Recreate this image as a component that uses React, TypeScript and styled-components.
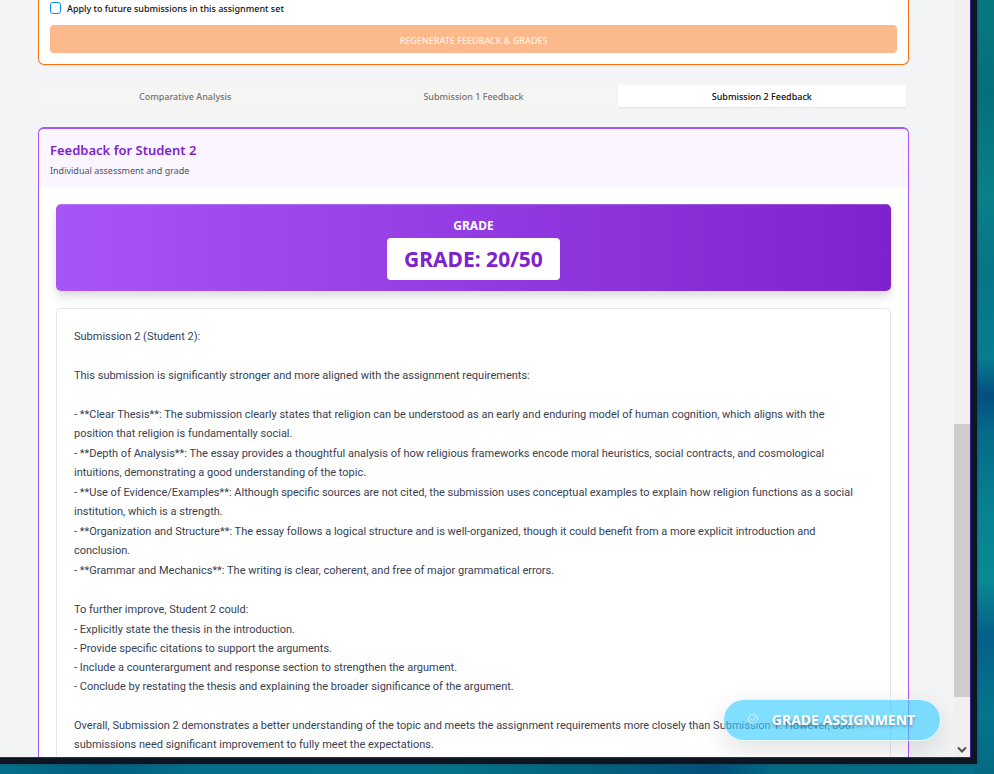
import React from "react";
import styled, { createGlobalStyle } from "styled-components";

const GlobalStyle = createGlobalStyle`
  *, *::before, *::after { box-sizing: border-box; }
  body { margin: 0; overflow: hidden; font-family: "Noto Sans", "Open Sans", sans-serif; }
  h2, p, ul { margin: 0; padding: 0; }
  button { font-family: inherit; border: 0; padding: 0; cursor: pointer; }
`;

const Desktop = styled.div`
  height: 100vh;
  padding: 0 17px 10px 0;
  background:
    linear-gradient(90deg, #04708a 0%, #035f7f 10%, #04708a 20%, #04738a 45%, #045f7c 62%, #034f7a 72%, #046a84 78%, #046f88 98%, transparent 98%) bottom / 100% 10px no-repeat,
    linear-gradient(180deg, #087880 0%, #066f7c 12%, #0a8087 25%, #067687 35%, #067e90 46%, #044f80 51%, #056a8a 56%, #078291 66%, #0a8a94 75%, #05608a 82%, #05748c 92%, #046a84 100%);
`;

const WindowFrame = styled.div`
  height: 100%;
  border: solid #0d1523;
  border-width: 0 6px 6px 0;
  box-shadow: 0 0 2px #1f3f48;
`;

const WindowBody = styled.div`
  display: flex;
  height: 100%;
  border: solid #3a1f9e;
  border-width: 0 1px 1px 0;
  background: #f3f4f6;
`;

const Viewport = styled.div`
  position: relative;
  flex: 1;
  min-width: 0;
  overflow: hidden;
  padding: 0 45px 0 38px;
`;

const Scrollbar = styled.div`
  display: flex;
  flex-direction: column;
  width: 16px;
  background: #f0f0f0;
`;

const TrackAbove = styled.div`
  flex: 424 0 0;
`;

const Thumb = styled.div`
  flex: 273 0 0;
  background: #cdcdcd;
`;

const TrackBelow = styled.div`
  display: flex;
  flex: 60 0 0;
  align-items: flex-end;
  justify-content: center;

  svg { margin-bottom: 3px; }
`;

const OptionsCard = styled.section`
  padding: 0 11px 11px;
  border: 1px solid #f97316;
  border-top: 0;
  border-radius: 0 0 6px 6px;
  background: #fff;
  box-shadow: 0 1px 2px rgba(0, 0, 0, 0.06);
`;

const CheckLabel = styled.label`
  display: flex;
  align-items: center;
  gap: 6px;
  height: 25px;
  padding-bottom: 9px;
  color: #111;
  font-size: 9px;
  font-weight: 500;
`;

const CheckBox = styled.input`
  appearance: none;
  width: 11px;
  height: 12px;
  margin: 0;
  border: 1px solid #0c8ce9;
  border-radius: 3px;
  background: #fff;
`;

const RegenerateButton = styled.button`
  display: block;
  width: 100%;
  height: 28px;
  border-radius: 4px;
  background: #fcb98b;
  color: #fff0e5;
  font-size: 9px;
  font-weight: 500;
  padding-top: 2px;
`;

const Tabs = styled.div`
  display: grid;
  grid-template-columns: repeat(3, 1fr);
  margin: 17px 0;
  padding: 3px;
  border-radius: 5px;
  background: #f5f5f4;
`;

const Tab = styled.button<{ $active?: boolean }>`
  height: 22px;
  border-radius: 2px;
  background: ${(p) => (p.$active ? "#fff" : "transparent")};
  box-shadow: ${(p) => (p.$active ? "0 1px 2px rgba(0, 0, 0, 0.08)" : "none")};
  color: ${(p) => (p.$active ? "#0c0a09" : "#78716c")};
  font-size: 9px;
  font-weight: 500;
`;

const FeedbackCard = styled.section`
  border: 1px solid #a855f7;
  border-top-width: 2px;
  border-radius: 6px 6px 0 0;
  background: #fff;
`;

const FeedbackHeader = styled.header`
  height: 58px;
  padding: 12px 12px 0 11px;
  border-radius: 5px 5px 0 0;
  background: #faf5ff;
`;

const FeedbackTitle = styled.h2`
  color: #7e22ce;
  font-size: 13px;
  font-weight: 600;
  line-height: 18px;
`;

const FeedbackSubtitle = styled.p`
  margin-top: 5px;
  color: #4b5563;
  font-size: 9px;
  line-height: 14px;
`;

const FeedbackContent = styled.div`
  padding: 17px;
`;

const GradeBanner = styled.div`
  display: flex;
  flex-direction: column;
  align-items: center;
  margin-bottom: 17px;
  padding: 13px 0 11px;
  border-radius: 5px;
  background: linear-gradient(90deg, #a855f7, #7e22ce);
  box-shadow: 0 7px 10px rgba(0, 0, 0, 0.1), 0 3px 4px rgba(0, 0, 0, 0.04), inset 0 1px rgba(255, 255, 255, 0.2);
`;

const GradeHeading = styled.div`
  margin-bottom: 3px;
  color: #fff;
  font-size: 12px;
  font-weight: 700;
  line-height: 18px;
`;

const GradeValue = styled.div`
  padding: 6px 17px;
  border-radius: 4px;
  background: #fff;
  color: #7e22ce;
  font-size: 21px;
  font-weight: 700;
  line-height: 30px;
`;

const Report = styled.article`
  display: flex;
  flex-direction: column;
  gap: 20px;
  padding: 18px 28px 18px 17px;
  border: 1px solid #e5e7eb;
  border-radius: 5px;
  color: #374151;
  font-family: Roboto, "Open Sans", sans-serif;
  font-size: 11px;
  line-height: 19px;
`;

const ReportList = styled.ul<{ $gap: number }>`
  display: flex;
  flex-direction: column;
  gap: ${(p) => p.$gap}px;
  list-style: none;
`;

const Advice = styled.div`
  display: flex;
  flex-direction: column;
  gap: 1px;
`;

const GradeButton = styled.button`
  position: absolute;
  right: 13px;
  bottom: 16px;
  display: flex;
  align-items: center;
  justify-content: center;
  gap: 13px;
  width: 218px;
  height: 42px;
  padding: 0 2px 2px 0;
  border: 1px solid rgba(255, 255, 255, 0.8);
  border-radius: 21px;
  background: rgba(56, 203, 255, 0.64);
  box-shadow: 0 10px 30px rgba(0, 0, 0, 0.12);
  color: #fff;
  font-size: 14px;
  font-weight: 700;
  text-shadow: 0 2px 3px rgba(0, 0, 0, 0.3);
`;

const findings = [
  "- **Clear Thesis**: The submission clearly states that religion can be understood as an early and enduring model of human cognition, which aligns with the position that religion is fundamentally social.",
  "- **Depth of Analysis**: The essay provides a thoughtful analysis of how religious frameworks encode moral heuristics, social contracts, and cosmological intuitions, demonstrating a good understanding of the topic.",
  "- **Use of Evidence/Examples**: Although specific sources are not cited, the submission uses conceptual examples to explain how religion functions as a social institution, which is a strength.",
  "- **Organization and Structure**: The essay follows a logical structure and is well-organized, though it could benefit from a more explicit introduction and conclusion.",
  "- **Grammar and Mechanics**: The writing is clear, coherent, and free of major grammatical errors.",
];

const suggestions = [
  "- Explicitly state the thesis in the introduction.",
  "- Provide specific citations to support the arguments.",
  "- Include a counterargument and response section to strengthen the argument.",
  "- Conclude by restating the thesis and explaining the broader significance of the argument.",
];

export default function App() {
  return (
    <Desktop>
      <GlobalStyle />
      <WindowFrame>
        <WindowBody>
          <Viewport>
            <OptionsCard>
              <CheckLabel>
                <CheckBox type="checkbox" />
                Apply to future submissions in this assignment set
              </CheckLabel>
              <RegenerateButton type="button">REGENERATE FEEDBACK &amp; GRADES</RegenerateButton>
            </OptionsCard>
            <Tabs role="tablist">
              <Tab type="button" role="tab" aria-selected={false}>Comparative Analysis</Tab>
              <Tab type="button" role="tab" aria-selected={false}>Submission 1 Feedback</Tab>
              <Tab type="button" role="tab" aria-selected $active>Submission 2 Feedback</Tab>
            </Tabs>
            <FeedbackCard>
              <FeedbackHeader>
                <FeedbackTitle>Feedback for Student 2</FeedbackTitle>
                <FeedbackSubtitle>Individual assessment and grade</FeedbackSubtitle>
              </FeedbackHeader>
              <FeedbackContent>
                <GradeBanner>
                  <GradeHeading>GRADE</GradeHeading>
                  <GradeValue>GRADE: 20/50</GradeValue>
                </GradeBanner>
                <Report>
                  <p>Submission 2 (Student 2):</p>
                  <p>This submission is significantly stronger and more aligned with the assignment requirements:</p>
                  <ReportList $gap={1}>
                    {findings.map((text) => <li key={text}>{text}</li>)}
                  </ReportList>
                  <Advice>
                    <p>To further improve, Student 2 could:</p>
                    <ReportList $gap={0}>
                      {suggestions.map((text) => <li key={text}>{text}</li>)}
                    </ReportList>
                  </Advice>
                  <p>
                    Overall, Submission 2 demonstrates a better understanding of the topic and meets the assignment
                    requirements more closely than Submission 1. However, both submissions need significant improvement
                    to fully meet the expectations.
                  </p>
                </Report>
              </FeedbackContent>
            </FeedbackCard>
            <GradeButton type="button">
              <svg width="12" height="12" viewBox="0 0 12 12" fill="none" stroke="#fff" strokeOpacity="0.6" aria-hidden="true">
                <circle cx="6" cy="6" r="4.5" />
                <path d="M4 6l1.5 1.5L8.5 4.5" />
              </svg>
              GRADE ASSIGNMENT
            </GradeButton>
          </Viewport>
          <Scrollbar aria-hidden="true">
            <TrackAbove />
            <Thumb />
            <TrackBelow>
              <svg width="10" height="8" viewBox="0 0 10 8" fill="none" stroke="#505050" strokeWidth="2">
                <path d="M1 1.5l4 4 4-4" />
              </svg>
            </TrackBelow>
          </Scrollbar>
        </WindowBody>
      </WindowFrame>
    </Desktop>
  );
}
